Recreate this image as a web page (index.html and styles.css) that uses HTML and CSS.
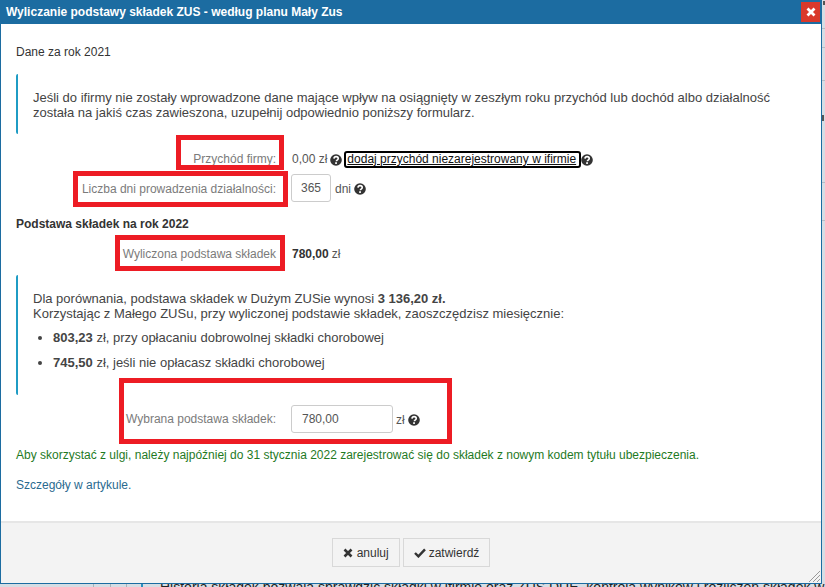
FILE: index.html
```html
<!DOCTYPE html>
<html lang="pl">
<head>
<meta charset="utf-8">
<title>Wyliczanie podstawy składek ZUS</title>
<link rel="stylesheet" href="styles.css">
</head>
<body>
<svg width="0" height="0" class="defs">
  <symbol id="q" viewBox="0 0 14 14">
    <circle cx="7" cy="7" r="6.8" fill="#333"/>
    <path d="M4.6 5.4C4.8 3.9 5.9 3.1 7.1 3.1c1.4 0 2.5.9 2.5 2.1 0 1.1-.7 1.6-1.3 2-.6.4-.8.7-.8 1.4" fill="none" stroke="#fff" stroke-width="1.9"/>
    <rect x="6" y="9.6" width="2.1" height="2" fill="#fff"/>
  </symbol>
</svg>
<div class="backdrop">
  <p class="behind">Historia składek pozwala sprawdzić składki w ifirmie oraz ZUS DUE, kontrola wyników i rozliczeń składek w miesiącu</p>
</div>
<section class="dialog">
  <header class="titlebar">
    <h1>Wyliczanie podstawy składek ZUS - według planu Mały Zus</h1>
    <button class="close" aria-label="zamknij"><svg width="10" height="10" viewBox="0 0 10 10"><path d="M1.5 1.5l7 7M8.5 1.5l-7 7" stroke="#fff" stroke-width="2.8"/></svg></button>
  </header>
  <div class="content">
    <h2 class="plain">Dane za rok 2021</h2>
    <div class="info first">
      <p>Jeśli do ifirmy nie zostały wprowadzone dane mające wpływ na osiągnięty w zeszłym roku przychód lub dochód albo działalność została na jakiś czas zawieszona, uzupełnij odpowiednio poniższy formularz.</p>
    </div>
    <div class="row r-income">
      <span class="lbl">Przychód firmy:</span>
      <span class="val">0,00 zł <svg class="qi"><use href="#q"/></svg><a class="focused" href="#">dodaj przychód niezarejestrowany w ifirmie</a><svg class="qi tight"><use href="#q"/></svg></span>
    </div>
    <div class="row r-days">
      <span class="lbl">Liczba dni prowadzenia działalności:</span>
      <span class="val"><input class="inp short" value="365"> dni <svg class="qi"><use href="#q"/></svg></span>
    </div>
    <h2>Podstawa składek na rok 2022</h2>
    <div class="row r-calc">
      <span class="lbl">Wyliczona podstawa składek</span>
      <span class="val"><b>780,00</b> zł</span>
    </div>
    <div class="info second">
      <p>Dla porównania, podstawa składek w Dużym ZUSie wynosi <b>3 136,20 zł.</b><br>Korzystając z Małego ZUSu, przy wyliczonej podstawie składek, zaoszczędzisz miesięcznie:</p>
      <ul>
        <li><b>803,23</b> zł, przy opłacaniu dobrowolnej składki chorobowej</li>
        <li><b>745,50</b> zł, jeśli nie opłacasz składki chorobowej</li>
      </ul>
    </div>
    <div class="row r-chosen">
      <span class="lbl">Wybrana podstawa składek:</span>
      <span class="val"><input class="inp wide" value="780,00"> zł <svg class="qi"><use href="#q"/></svg></span>
    </div>
    <p class="green">Aby skorzystać z ulgi, należy najpóźniej do 31 stycznia 2022 zarejestrować się do składek z nowym kodem tytułu ubezpieczenia.</p>
    <p class="more"><a href="#">Szczegóły w artykule.</a></p>
  </div>
  <footer class="actions">
    <button class="btn"><svg width="10" height="10" viewBox="0 0 10 10"><path d="M1.5 1.5l7 7M8.5 1.5l-7 7" stroke="#333" stroke-width="2.6"/></svg><span class="gap">anuluj</span></button>
    <button class="btn"><svg width="12" height="10" viewBox="0 0 12 10"><path d="M1 5l3.4 3.4L11 1.4" fill="none" stroke="#333" stroke-width="2.4"/></svg>zatwierdź</button>
    <svg class="grip" width="13" height="13" viewBox="0 0 13 13"><path d="M1 12L12 1M5 12l7-7M9 12l3-3" stroke="#999" stroke-width="1"/></svg>
  </footer>
</section>
<div class="mark m1"></div>
<div class="mark m2"></div>
<div class="mark m3"></div>
<div class="mark m4"></div>
</body>
</html>
```
FILE: styles.css
```css
* { box-sizing: border-box; }
html, body { margin: 0; height: 100%; overflow: hidden; }
body {
  position: relative;
  width: 825px;
  height: 587px;
  font: 12px/15px "Liberation Sans", Arial, sans-serif;
  color: #333;
}
.defs { position: absolute; }
.backdrop {
  position: absolute;
  inset: 0;
  overflow: hidden;
  background-color: #d6dde4;
  background-repeat: no-repeat;
  background-image:
    linear-gradient(#2a8fc0, #2a8fc0),
    linear-gradient(#aab3ba, #aab3ba),
    linear-gradient(#aab3ba, #aab3ba),
    linear-gradient(#aab3ba, #aab3ba),
    linear-gradient(#b4bcc4, #b4bcc4),
    linear-gradient(#b4bcc4, #b4bcc4),
    linear-gradient(#b4bcc4, #b4bcc4),
    linear-gradient(#b4bcc4, #b4bcc4),
    linear-gradient(#b4bcc4, #b4bcc4),
    linear-gradient(#555, #555),
    linear-gradient(#555, #555);
  background-size:
    2px 10px, 1px 10px, 1px 10px, 1px 10px,
    3px 1px, 3px 1px, 3px 1px, 3px 1px, 3px 1px,
    2px 4px, 2px 6px;
  background-position:
    141px 580px, 93px 580px, 110px 580px, 126px 580px,
    822px 28px, 822px 47px, 822px 80px, 822px 182px, 822px 220px,
    823px 1px, 822px 115px;
}
.behind {
  margin: 0;
  position: absolute;
  left: 160px;
  top: 580px;
  white-space: nowrap;
  font-size: 14px;
  color: #222;
}
.dialog {
  position: absolute;
  left: 0;
  top: 0;
  width: 822px;
  height: 584px;
  display: flex;
  flex-direction: column;
  background: #fff;
  border: 1px solid #1c6ca1;
  border-top: 0;
}
.titlebar {
  height: 24px;
  flex: none;
  margin: 0 -1px;
  padding: 0 6px;
  background: #1c6ca1;
  display: flex;
  align-items: center;
  justify-content: space-between;
  position: relative;
}
.titlebar h1 { margin: 0; font-size: 12px; font-weight: bold; color: #fff; }
.close {
  position: absolute;
  right: 2px;
  top: 2px;
  width: 19px;
  height: 20px;
  padding: 0;
  border: 0;
  background: #d9392b;
  display: flex;
  align-items: center;
  justify-content: center;
}
.content { flex: 1; padding: 21px 15px 0; }
h2 { margin: 0; font-size: 12px; line-height: 15px; font-weight: bold; color: #333; }
h2.plain { font-weight: normal; }
.r-days + h2 { margin-top: 13px; }
.info {
  border-left: 2px solid #1f9cc4;
  border-radius: 2px;
  padding-left: 15px;
  font-size: 13px;
  color: #444;
}
.info p { margin: 0; }
.first { margin-top: 14px; height: 60px; padding-top: 16px; }
.second { margin-top: 6px; height: 120px; padding-top: 16px; }
ul { margin: 9px 0 0; padding: 0 0 0 20px; }
li { margin-bottom: 10px; line-height: 15px; }
.row { display: grid; grid-template-columns: 260px auto; column-gap: 15px; align-items: center; }
.lbl { text-align: right; color: #7b7b7b; }
.val { display: flex; align-items: center; gap: 3px; color: #555; }
.val b { color: #333; }
.r-income { margin-top: 13px; height: 25px; }
.r-income .val, .r-calc .val { padding-left: 1px; }
.r-days { margin-top: 2px; height: 30px; }
.r-calc { margin-top: 7px; height: 30px; }
.r-chosen { margin-top: 10px; height: 30px; }
.r-chosen .lbl { margin-bottom: 2px; }
.qi { width: 12px; height: 12px; flex: none; }
.tight { margin-left: -3px; }
.focused {
  color: #111;
  border: 2px solid #000;
  border-radius: 3px;
  padding: 0 3px 0 1px;
  margin-left: -1px;
  line-height: 13px;
  text-decoration: underline;
}
.inp {
  height: 28px;
  border: 1px solid #ccc;
  border-radius: 3px;
  padding: 0 10px;
  margin-bottom: 2px;
  font: 12px "Liberation Sans", Arial, sans-serif;
  color: #555;
}
.short { width: 40px; text-align: center; padding: 0; margin-right: 1px; }
.wide { width: 102px; }
.green { margin: 13px 0 0; color: #1f7a1f; }
.more { margin: 15px 0 0; }
.more a { color: #2a6a8f; text-decoration: none; }
.actions {
  flex: none;
  height: 62px;
  background: #f3f3f3;
  border-top: 2px solid #e6e6e6;
  display: flex;
  justify-content: center;
  align-items: flex-start;
  gap: 3px;
  padding-top: 15px;
  position: relative;
}
.btn {
  height: 29px;
  padding: 0 10px;
  background: #f3f3f3;
  border: 1px solid #d8d8d8;
  font: 12px "Liberation Sans", Arial, sans-serif;
  color: #333;
  display: flex;
  align-items: center;
  gap: 3px;
}
.gap { margin-left: 1px; }
.grip { position: absolute; right: 0; bottom: 0; }
.mark { position: absolute; border: 5px solid #ed1c24; }
.m1 { left: 176px; top: 135px; width: 108px; height: 35px; }
.m2 { left: 73px; top: 171px; width: 215px; height: 36px; }
.m3 { left: 115px; top: 235px; width: 170px; height: 36px; }
.m4 { left: 119px; top: 378px; width: 333px; height: 66px; }
```
